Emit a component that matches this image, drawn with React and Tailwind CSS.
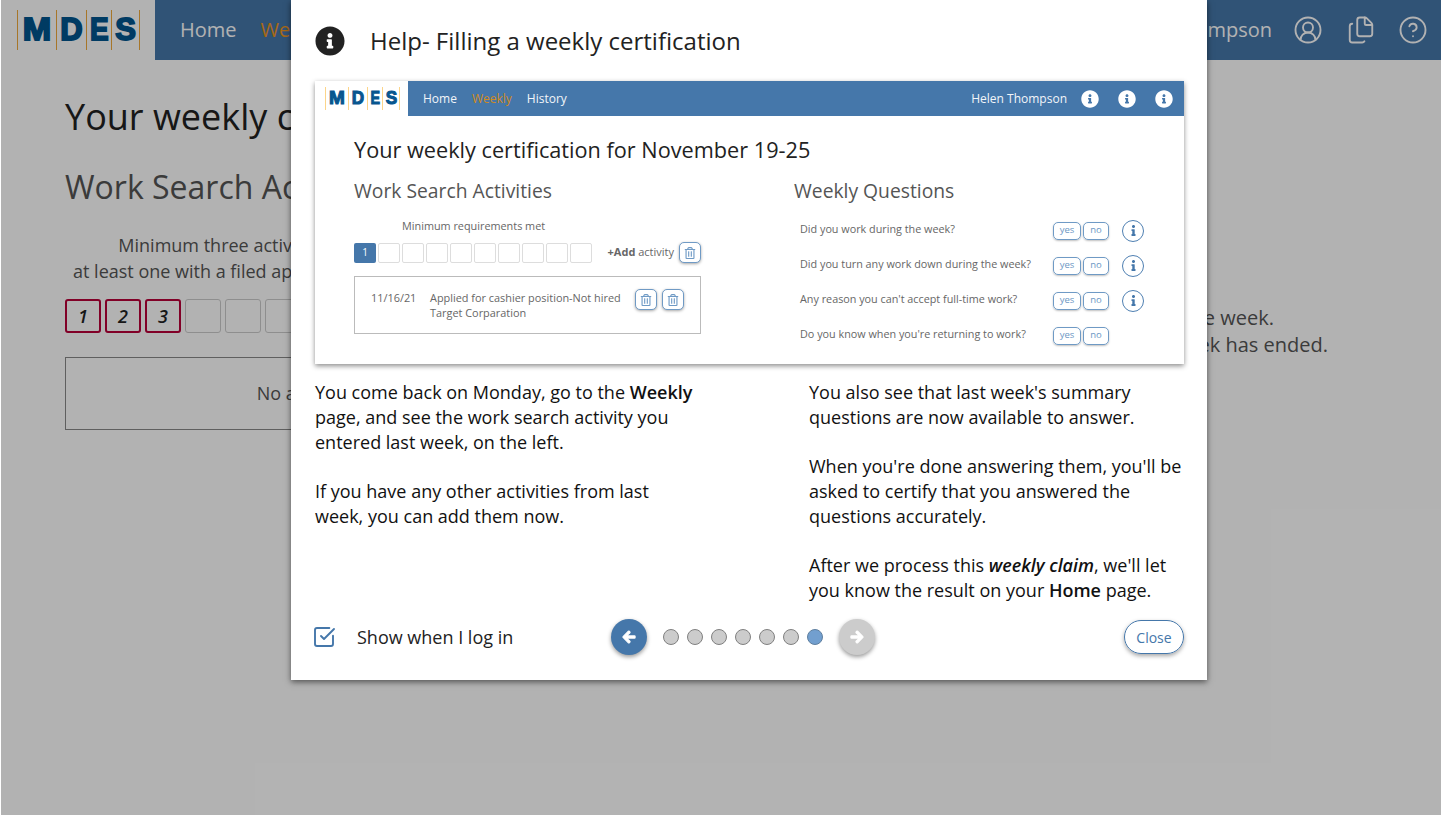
import { FaInfoCircle, FaInfo, FaRegTrashAlt, FaArrowLeft, FaArrowRight } from "react-icons/fa";
import { CircleUserRound, Files, CircleHelp, SquareCheckBig } from "lucide-react";

const Logo = ({ mini }) => {
  const bar = mini ? "border-l border-[#fcd58a] h-[23px] flex items-center justify-center" : "border-l border-[#f0a93c] h-[40px] flex items-center justify-center";
  const text = mini
    ? "font-['Liberation_Sans',sans-serif] font-bold text-[19px] text-[#07568f] [-webkit-text-stroke:1.1px_#07568f]"
    : "font-['Liberation_Sans',sans-serif] font-bold text-[31px] text-[#00558f] [-webkit-text-stroke:1.8px_#00558f]";
  const widths = mini ? ["w-[23px]", "w-[19px]", "w-[15px]", "w-[17px]"] : ["w-[39px]", "w-[30px]", "w-[25px]", "w-[28px]"];
  const scales = mini ? ["scale-x-100", "scale-x-90", "scale-x-75", "scale-x-90"] : ["scale-x-110", "scale-x-100", "scale-x-90", "scale-x-100"];
  return (
    <div className={mini ? "flex border-r border-[#fcd58a]" : "flex border-r border-[#f0a93c]"}>
      {["M", "D", "E", "S"].map((l, i) => (
        <div key={l} className={bar + " " + widths[i]}>
          <span className={text + " " + scales[i]}>{l}</span>
        </div>
      ))}
    </div>
  );
};

const TrashBtn = () => (
  <div className="w-[22px] h-[21px] rounded-[5px] border border-[#6f9ac5] bg-white shadow-[0_1px_3px_rgba(0,0,0,0.35)] flex items-center justify-center text-[#6f9ac5] text-[12px]">
    <FaRegTrashAlt />
  </div>
);

const InfoOutline = () => (
  <div className="w-[22px] h-[22px] rounded-full border-[1.5px] border-[#4f80b2] flex items-center justify-center text-[#4577aa] text-[11px]">
    <FaInfo />
  </div>
);

const Question = ({ text, info }) => (
  <div className="flex items-center h-[35px]">
    <div className="w-[259px] pl-[6px] -mt-[2px] text-[10.8px] text-[#666] whitespace-nowrap">{text}</div>
    <div className="w-[28px] h-[18px] rounded-[5px] border border-[#6f9ac5] shadow-[0_1px_2px_rgba(0,0,0,0.25)] text-[9.5px] text-[#6b97c4] flex items-center justify-center">yes</div>
    <div className="ml-[2px] w-[26px] h-[18px] rounded-[5px] border border-[#6f9ac5] shadow-[0_1px_2px_rgba(0,0,0,0.25)] text-[9.5px] text-[#6b97c4] flex items-center justify-center">no</div>
    {info && <div className="ml-[13px]"><InfoOutline /></div>}
  </div>
);

const Preview = () => (
  <div className="w-[869px] h-[283px] bg-white shadow-[0_2px_5px_rgba(0,0,0,0.45)]">
    <div className="flex h-[35px]">
      <div className="w-[93px] pl-[10px] flex items-center"><Logo mini /></div>
      <div className="flex-1 bg-[#4577aa] flex items-center text-[12px] text-[#f2f5f9] pl-[15px] pr-[11px]">
        <span>Home</span>
        <span className="ml-[15px] text-[#d08a20]">Weekly</span>
        <span className="ml-[15px]">History</span>
        <span className="ml-auto">Helen Thompson</span>
        <FaInfoCircle className="ml-[14px] text-[18px] text-white" />
        <FaInfoCircle className="ml-[19px] text-[18px] text-white" />
        <FaInfoCircle className="ml-[19px] text-[18px] text-white" />
      </div>
    </div>
    <div className="pl-[39px] pt-[19px]">
      <div className="text-[21.7px] leading-[30px] text-[#222]">Your weekly certification for November 19-25</div>
      <div className="flex mt-[13px]">
        <div className="w-[440px]">
          <div className="text-[19.3px] leading-[26px] text-[#555]">Work Search Activities</div>
          <div className="mt-[14px] pl-[48px] text-[10.85px] leading-[16px] text-[#666]">Minimum requirements met</div>
          <div className="mt-[8px] flex items-center w-[347px]">
            <div className="flex gap-[2px]">
              <div className="w-[22px] h-[20px] rounded-[2px] bg-[#4577aa] text-white text-[10px] flex items-center justify-center">1</div>
              {[2, 3, 4, 5, 6, 7, 8, 9, 10].map((n) => (
                <div key={n} className="w-[22px] h-[20px] rounded-[2px] border border-[#ddd]"></div>
              ))}
            </div>
            <div className="ml-auto text-[11px] text-[#666] whitespace-nowrap"><b>+Add</b> activity</div>
            <div className="ml-[5px]"><TrashBtn /></div>
          </div>
          <div className="mt-[13px] w-[347px] h-[58px] border border-[#bbb] flex pl-[16px] pt-[13px] text-[10.9px] leading-[15px] text-[#666]">
            <div className="w-[59px]">11/16/21</div>
            <div className="w-[205px] whitespace-nowrap">Applied for cashier position-Not hired<br />Target Corparation</div>
            <div className="flex gap-[5px] -mt-[1px] h-[21px]"><TrashBtn /><TrashBtn /></div>
          </div>
        </div>
        <div>
          <div className="text-[19.3px] leading-[26px] text-[#555]">Weekly Questions</div>
          <div className="mt-[9px]">
            <Question text="Did you work during the week?" info />
            <Question text="Did you turn any work down during the week?" info />
            <Question text="Any reason you can't accept full-time work?" info />
            <Question text="Do you know when you're returning to work?" />
          </div>
        </div>
      </div>
    </div>
  </div>
);

const Dot = ({ on }) => (
  <div className={on ? "w-[16px] h-[16px] rounded-full border border-[#5f7f9f] bg-[#729fcf]" : "w-[16px] h-[16px] rounded-full border border-[#808080] bg-[#cccccc]"}></div>
);

const Modal = () => (
  <div className="absolute left-[291px] top-0 w-[916px] h-[680px] bg-white shadow-[0_2px_6px_rgba(0,0,0,0.55)] pl-[24px] pr-[23px] flex flex-col font-['Open_Sans',sans-serif]">
    <div className="h-[81px] flex items-center">
      <FaInfoCircle className="text-[30px] text-[#222]" />
      <div className="ml-[25px] text-[24px] text-[#222]">Help- Filling a weekly certification</div>
    </div>
    <Preview />
    <div className="flex mt-[16px] text-[18px] leading-[24.75px] text-[#111]">
      <div className="w-[494px]">
        <div className="w-[383px]">
          <p>You come back on Monday, go to the <span className="font-semibold">Weekly</span> page, and see the work search activity you entered last week, on the left.</p>
          <p className="mt-[24.75px]">If you have any other activities from last week, you can add them now.</p>
        </div>
      </div>
      <div className="w-[375px]">
        <p>You also see that last week's summary questions are now available to answer.</p>
        <p className="mt-[24.75px]">When you're done answering them, you'll be asked to certify that you answered the questions accurately.</p>
        <p className="mt-[24.75px]">After we process this <span className="font-semibold italic">weekly claim</span>, we'll let you know the result on your <span className="font-semibold">Home</span> page.</p>
      </div>
    </div>
    <div className="mt-auto mb-[26px] h-[34px] flex items-center">
      <SquareCheckBig className="-ml-[3px] w-[24px] h-[24px] text-[#4577aa]" strokeWidth={1.9} />
      <div className="ml-[21px] w-[254px] text-[18px] text-[#222]">Show when I log in</div>
      <div className="w-[36px] h-[36px] rounded-full bg-[#4577aa] text-white text-[14px] flex items-center justify-center shadow-[0_2px_4px_rgba(0,0,0,0.4)]"><FaArrowLeft stroke="currentColor" strokeWidth={40} /></div>
      <div className="ml-[16px] flex gap-[8px]">
        <Dot /><Dot /><Dot /><Dot /><Dot /><Dot /><Dot on />
      </div>
      <div className="ml-[16px] w-[36px] h-[36px] rounded-full bg-[#cccccc] text-white text-[14px] flex items-center justify-center shadow-[0_2px_4px_rgba(0,0,0,0.4)]"><FaArrowRight stroke="currentColor" strokeWidth={40} /></div>
      <div className="ml-auto w-[60px] h-[34px] rounded-full border border-[#4577aa] text-[#4577aa] text-[14px] flex items-center justify-center shadow-[0_2px_4px_rgba(0,0,0,0.35)]">Close</div>
    </div>
  </div>
);

const Page = () => (
  <div className="font-['Open_Sans',sans-serif]">
    <div className="flex h-[60px]">
      <div className="w-[155px] pl-[17px] flex items-center"><Logo /></div>
      <div className="flex-1 bg-[#4577aa] flex items-center text-[20px] text-white pl-[25px] pr-[13px]">
        <span>Home</span>
        <span className="ml-[24px] text-[#f0961e]">Weekly</span>
        <span className="ml-[24px]">History</span>
        <span className="ml-auto">Helen Thompson</span>
        <CircleUserRound className="ml-[21px] w-[30px] h-[30px]" strokeWidth={1.5} />
        <Files className="ml-[23px] w-[30px] h-[30px]" strokeWidth={1.5} />
        <CircleHelp className="ml-[22px] w-[30px] h-[30px]" strokeWidth={1.5} />
      </div>
    </div>
    <div className="pl-[65px] pt-[32px]">
      <div className="text-[36px] leading-[50px] text-[#222]">Your weekly certification for November 19-25</div>
      <div className="flex mt-[23px]">
        <div className="w-[556px]">
          <div className="text-[32px] leading-[44px] text-[#555]">Work Search Activities</div>
          <div className="mt-[23px] text-[18px] leading-[26px] text-[#555] text-center whitespace-nowrap">
            <div>Minimum three activities are required for every week,</div>
            <div className="pl-[8px]">at least one with a filed application or one job interview this week.</div>
          </div>
          <div className="mt-[15px] flex gap-[4px]">
            {[1, 2, 3].map((n) => (
              <div key={n} className="w-[36px] h-[34px] rounded-[3px] border-2 border-[#b90039] text-[18px] font-semibold italic text-[#222] flex items-center justify-center">{n}</div>
            ))}
            {[4, 5, 6, 7, 8, 9, 10].map((n) => (
              <div key={n} className="w-[36px] h-[34px] rounded-[3px] border border-[#ccc]"></div>
            ))}
          </div>
          <div className="mt-[24px] h-[73px] border border-[#888] flex items-center justify-center text-[18px] text-[#555]">No activities entered</div>
        </div>
        <div className="flex-1 pr-[113px] flex flex-col items-end pt-[139px] text-[20px] leading-[27px] text-[#555] whitespace-nowrap">
          <div className="mr-[54px]">Answer the questions for the week.</div>
          <div>They open after the week has ended.</div>
        </div>
      </div>
    </div>
  </div>
);

export default function App() {
  return (
    <div className="relative w-full h-[815px] overflow-hidden bg-white">
      <Page />
      <div className="absolute inset-y-0 left-px right-0 bg-black/30"></div>
      <Modal />
    </div>
  );
}
